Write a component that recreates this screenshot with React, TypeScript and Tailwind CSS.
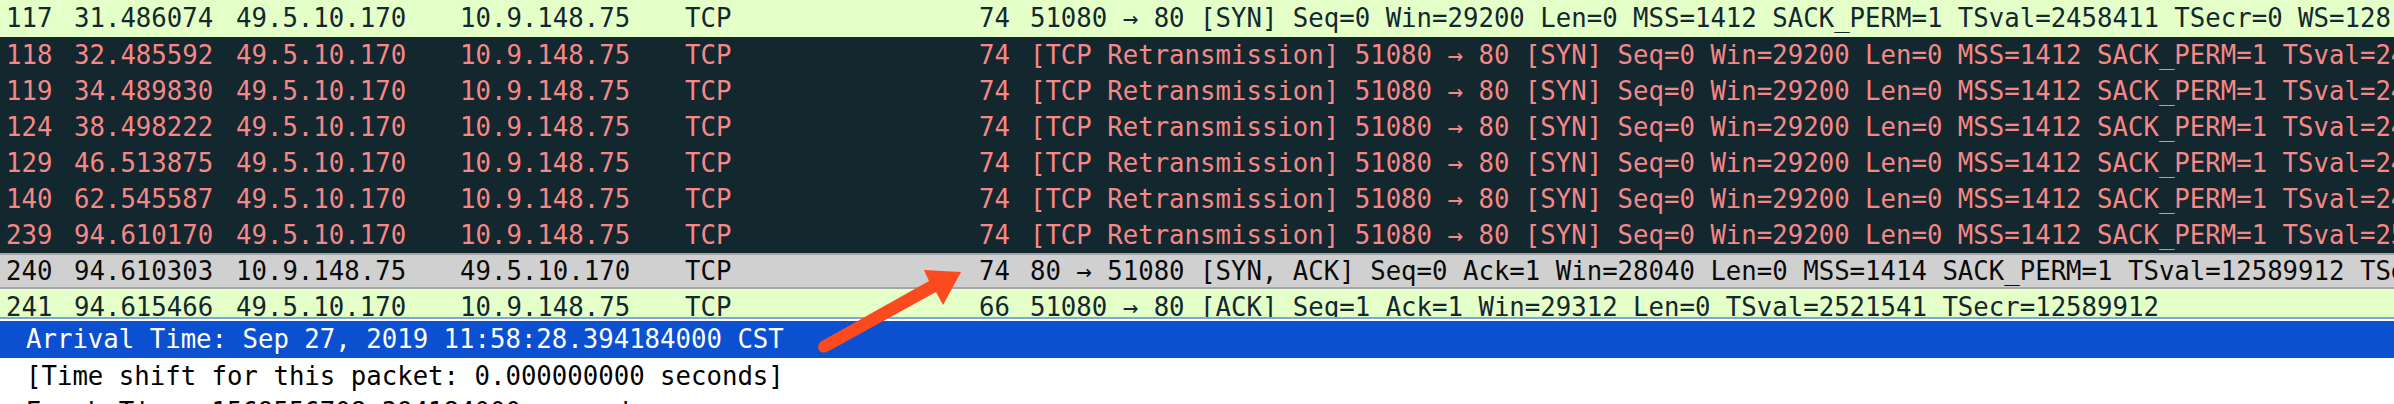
import React from "react";

type Row = {
  no: string;
  time: string;
  src: string;
  dst: string;
  proto: string;
  len: string;
  info: string;
  kind: "green" | "bad" | "syn";
};

const rows: Row[] = [
  { no: "117", time: "31.486074", src: "49.5.10.170", dst: "10.9.148.75", proto: "TCP", len: "74", info: "51080 → 80 [SYN] Seq=0 Win=29200 Len=0 MSS=1412 SACK_PERM=1 TSval=2458411 TSecr=0 WS=128", kind: "green" },
  { no: "118", time: "32.485592", src: "49.5.10.170", dst: "10.9.148.75", proto: "TCP", len: "74", info: "[TCP Retransmission] 51080 → 80 [SYN] Seq=0 Win=29200 Len=0 MSS=1412 SACK_PERM=1 TSval=2459412 TSecr=0 WS=128", kind: "bad" },
  { no: "119", time: "34.489830", src: "49.5.10.170", dst: "10.9.148.75", proto: "TCP", len: "74", info: "[TCP Retransmission] 51080 → 80 [SYN] Seq=0 Win=29200 Len=0 MSS=1412 SACK_PERM=1 TSval=2461416 TSecr=0 WS=128", kind: "bad" },
  { no: "124", time: "38.498222", src: "49.5.10.170", dst: "10.9.148.75", proto: "TCP", len: "74", info: "[TCP Retransmission] 51080 → 80 [SYN] Seq=0 Win=29200 Len=0 MSS=1412 SACK_PERM=1 TSval=2465424 TSecr=0 WS=128", kind: "bad" },
  { no: "129", time: "46.513875", src: "49.5.10.170", dst: "10.9.148.75", proto: "TCP", len: "74", info: "[TCP Retransmission] 51080 → 80 [SYN] Seq=0 Win=29200 Len=0 MSS=1412 SACK_PERM=1 TSval=2473440 TSecr=0 WS=128", kind: "bad" },
  { no: "140", time: "62.545587", src: "49.5.10.170", dst: "10.9.148.75", proto: "TCP", len: "74", info: "[TCP Retransmission] 51080 → 80 [SYN] Seq=0 Win=29200 Len=0 MSS=1412 SACK_PERM=1 TSval=2489472 TSecr=0 WS=128", kind: "bad" },
  { no: "239", time: "94.610170", src: "49.5.10.170", dst: "10.9.148.75", proto: "TCP", len: "74", info: "[TCP Retransmission] 51080 → 80 [SYN] Seq=0 Win=29200 Len=0 MSS=1412 SACK_PERM=1 TSval=2521536 TSecr=0 WS=128", kind: "bad" },
  { no: "240", time: "94.610303", src: "10.9.148.75", dst: "49.5.10.170", proto: "TCP", len: "74", info: "80 → 51080 [SYN, ACK] Seq=0 Ack=1 Win=28040 Len=0 MSS=1414 SACK_PERM=1 TSval=12589912 TSecr=2521536 WS=128", kind: "syn" },
  { no: "241", time: "94.615466", src: "49.5.10.170", dst: "10.9.148.75", proto: "TCP", len: "66", info: "51080 → 80 [ACK] Seq=1 Ack=1 Win=29312 Len=0 TSval=2521541 TSecr=12589912", kind: "green" },
];

const rowStyle = {
  green: "bg-[#e4ffc7] text-[#12272e]",
  bad: "bg-[#12272e] text-[#f78787]",
  syn: "bg-[#d0d0d0] text-[#0a0a0a] border-y-2 border-[#a6a6a6]",
};

function PacketRow({ r, first }: { r: Row; first?: boolean }) {
  const h =
    r.kind === "syn"
      ? "h-[36px] leading-[32px]"
      : first
      ? "h-[37px] leading-[37px]"
      : "h-[36px] leading-[36px]";
  return (
    <div className={`flex whitespace-nowrap ${h} ${rowStyle[r.kind]}`}>
      <div className="w-[74px] shrink-0 pl-[6px]">{r.no}</div>
      <div className="w-[162px] shrink-0">{r.time}</div>
      <div className="w-[224px] shrink-0">{r.src}</div>
      <div className="w-[225px] shrink-0">{r.dst}</div>
      <div className="w-[294px] shrink-0">{r.proto}</div>
      <div className="shrink-0">{r.len}</div>
      <div className="shrink-0 pl-[20px]">{r.info}</div>
    </div>
  );
}

export default function App() {
  return (
    <div
      className="relative w-[2394px] h-[404px] overflow-hidden bg-white text-[25.7px]"
      style={{ fontFamily: '"DejaVu Sans Mono", "Liberation Mono", monospace' }}
    >
      {/* packet list */}
      <div className="h-[317px] overflow-hidden">
        {rows.map((r, i) => (
          <PacketRow key={r.no} r={r} first={i === 0} />
        ))}
      </div>

      {/* pane splitter */}
      <div className="h-[2px] bg-[#7ea6e2]" />
      <div className="h-[2px] bg-white" />

      {/* packet details */}
      <div className="whitespace-nowrap">
        <div className="h-[37px] leading-[36px] bg-[#0b50d0] text-white pl-[26px]">
          Arrival Time: Sep 27, 2019 11:58:28.394184000 CST
        </div>
        <div className="h-[36px] leading-[36px] text-black pl-[26px]">
          [Time shift for this packet: 0.000000000 seconds]
        </div>
        <div className="h-[36px] leading-[36px] text-black pl-[26px]">
          Epoch Time: 1569556708.394184000 seconds
        </div>
      </div>

      {/* annotation arrow */}
      <svg
        className="absolute left-0 top-0 pointer-events-none"
        width="2394"
        height="404"
        viewBox="0 0 2394 404"
      >
        <path
          d="M820 342 L929 281 L924 270 L961 272 L943 305 L936 292 L827 352 Z"
          fill="#fb4a1d"
        />
        <circle cx="823.5" cy="347" r="5.5" fill="#fb4a1d" />
      </svg>
    </div>
  );
}
